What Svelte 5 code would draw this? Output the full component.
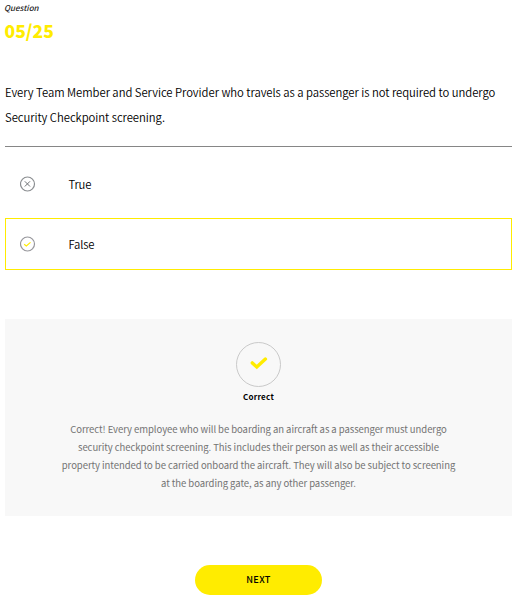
<script>
  const number = '05/25';
  const question = [
    'Every Team Member and Service Provider who travels as a passenger is not required to undergo',
    'Security Checkpoint screening.'
  ];
  const feedback = [
    'Correct! Every employee who will be boarding an aircraft as a passenger must undergo',
    'security checkpoint screening. This includes their person as well as their accessible',
    'property intended to be carried onboard the aircraft. They will also be subject to screening',
    'at the boarding gate, as any other passenger.'
  ];
</script>

<main>
  <header>
    <div class="label">Question</div>
    <div class="number">{number}</div>
  </header>

  <div class="question">
    {#each question as line}<div><span>{line}</span></div>{/each}
  </div>

  <div class="option">
    <svg width="16" height="16" viewBox="0 0 16 16" fill="none">
      <circle cx="7.5" cy="8" r="7" stroke="#8b8e91" stroke-width="1.2" />
      <path d="M4.8 5.3l5.2 5.2M10 5.3l-5.2 5.2" stroke="#6f7275" />
    </svg>
    <span>True</span>
  </div>
  <div class="option selected">
    <svg width="16" height="16" viewBox="0 0 16 16" fill="none">
      <circle cx="7.5" cy="8" r="7" stroke="#97979c" stroke-width="1.2" />
      <path d="M4.2 8.2l2.1 1.7 4.2-3.5" stroke="#ffec00" stroke-width="1.2" />
    </svg>
    <span>False</span>
  </div>

  <section>
    <svg width="46" height="46" viewBox="0 0 46 46" fill="none">
      <circle cx="22.5" cy="22.5" r="22" stroke="#c9c9c9" />
      <path d="M16.3 20.9l4.5 4.1 8.6-7.9" stroke="#ffec00" stroke-width="3.4" stroke-linecap="round" />
    </svg>
    <div class="result">Correct</div>
    <div class="feedback">
      {#each feedback as line}<div><span>{line}</span></div>{/each}
    </div>
  </section>

  <button>NEXT</button>
</main>

<style>
  :global(body) {
    background: #fff;
  }
  main {
    box-sizing: border-box;
    width: 513px;
    height: 604px;
    padding: 0 1px 0 5px;
    overflow: hidden;
    display: flex;
    flex-direction: column;
    font-family: 'Noto Sans CJK SC', 'Noto Sans', sans-serif;
    color: #000;
    white-space: nowrap;
  }
  header {
    height: 80px;
  }
  .label {
    padding-top: 1px;
    margin-left: -1px;
    font-size: 8px;
    line-height: 14px;
    font-style: italic;
    font-weight: 500;
    color: #222;
  }
  .number {
    margin-top: 4px;
    margin-left: -0.5px;
    font-size: 17.5px;
    line-height: 24px;
    font-weight: 900;
    color: #ffec00;
  }
  .question {
    height: 66px;
    border-bottom: 1px solid #868686;
    font-size: 11.3px;
    font-weight: 350;
    letter-spacing: -0.04px;
    line-height: 25px;
  }
  .option {
    box-sizing: border-box;
    height: 52px;
    margin-top: 11px;
    padding-left: 14px;
    border: 1px solid transparent;
    display: flex;
    align-items: center;
    gap: 32.5px;
    font-size: 11.3px;
    font-weight: 350;
    letter-spacing: -0.15px;
  }
  .selected {
    margin-top: 8px;
    border-color: #ffec00;
  }
  section {
    box-sizing: border-box;
    height: 197px;
    margin-top: 49px;
    padding-top: 23px;
    background: #f8f8f8;
    display: flex;
    flex-direction: column;
    align-items: center;
  }
  .result {
    margin-top: 2px;
    font-size: 8px;
    letter-spacing: 0.25px;
    line-height: 14px;
    font-weight: 700;
  }
  .feedback {
    margin-top: 16px;
    font-size: 9.5px;
    letter-spacing: -0.05px;
    line-height: 18px;
    color: #737373;
    text-align: center;
  }
  button {
    align-self: center;
    width: 127px;
    height: 30px;
    margin-top: 48.5px;
    padding: 0 0 2px;
    border: 0;
    border-radius: 15px;
    background: #ffec00;
    color: #000;
    font: 500 9.2px 'Noto Sans CJK SC', 'Noto Sans', sans-serif;
    letter-spacing: 0.3px;
  }
</style>
